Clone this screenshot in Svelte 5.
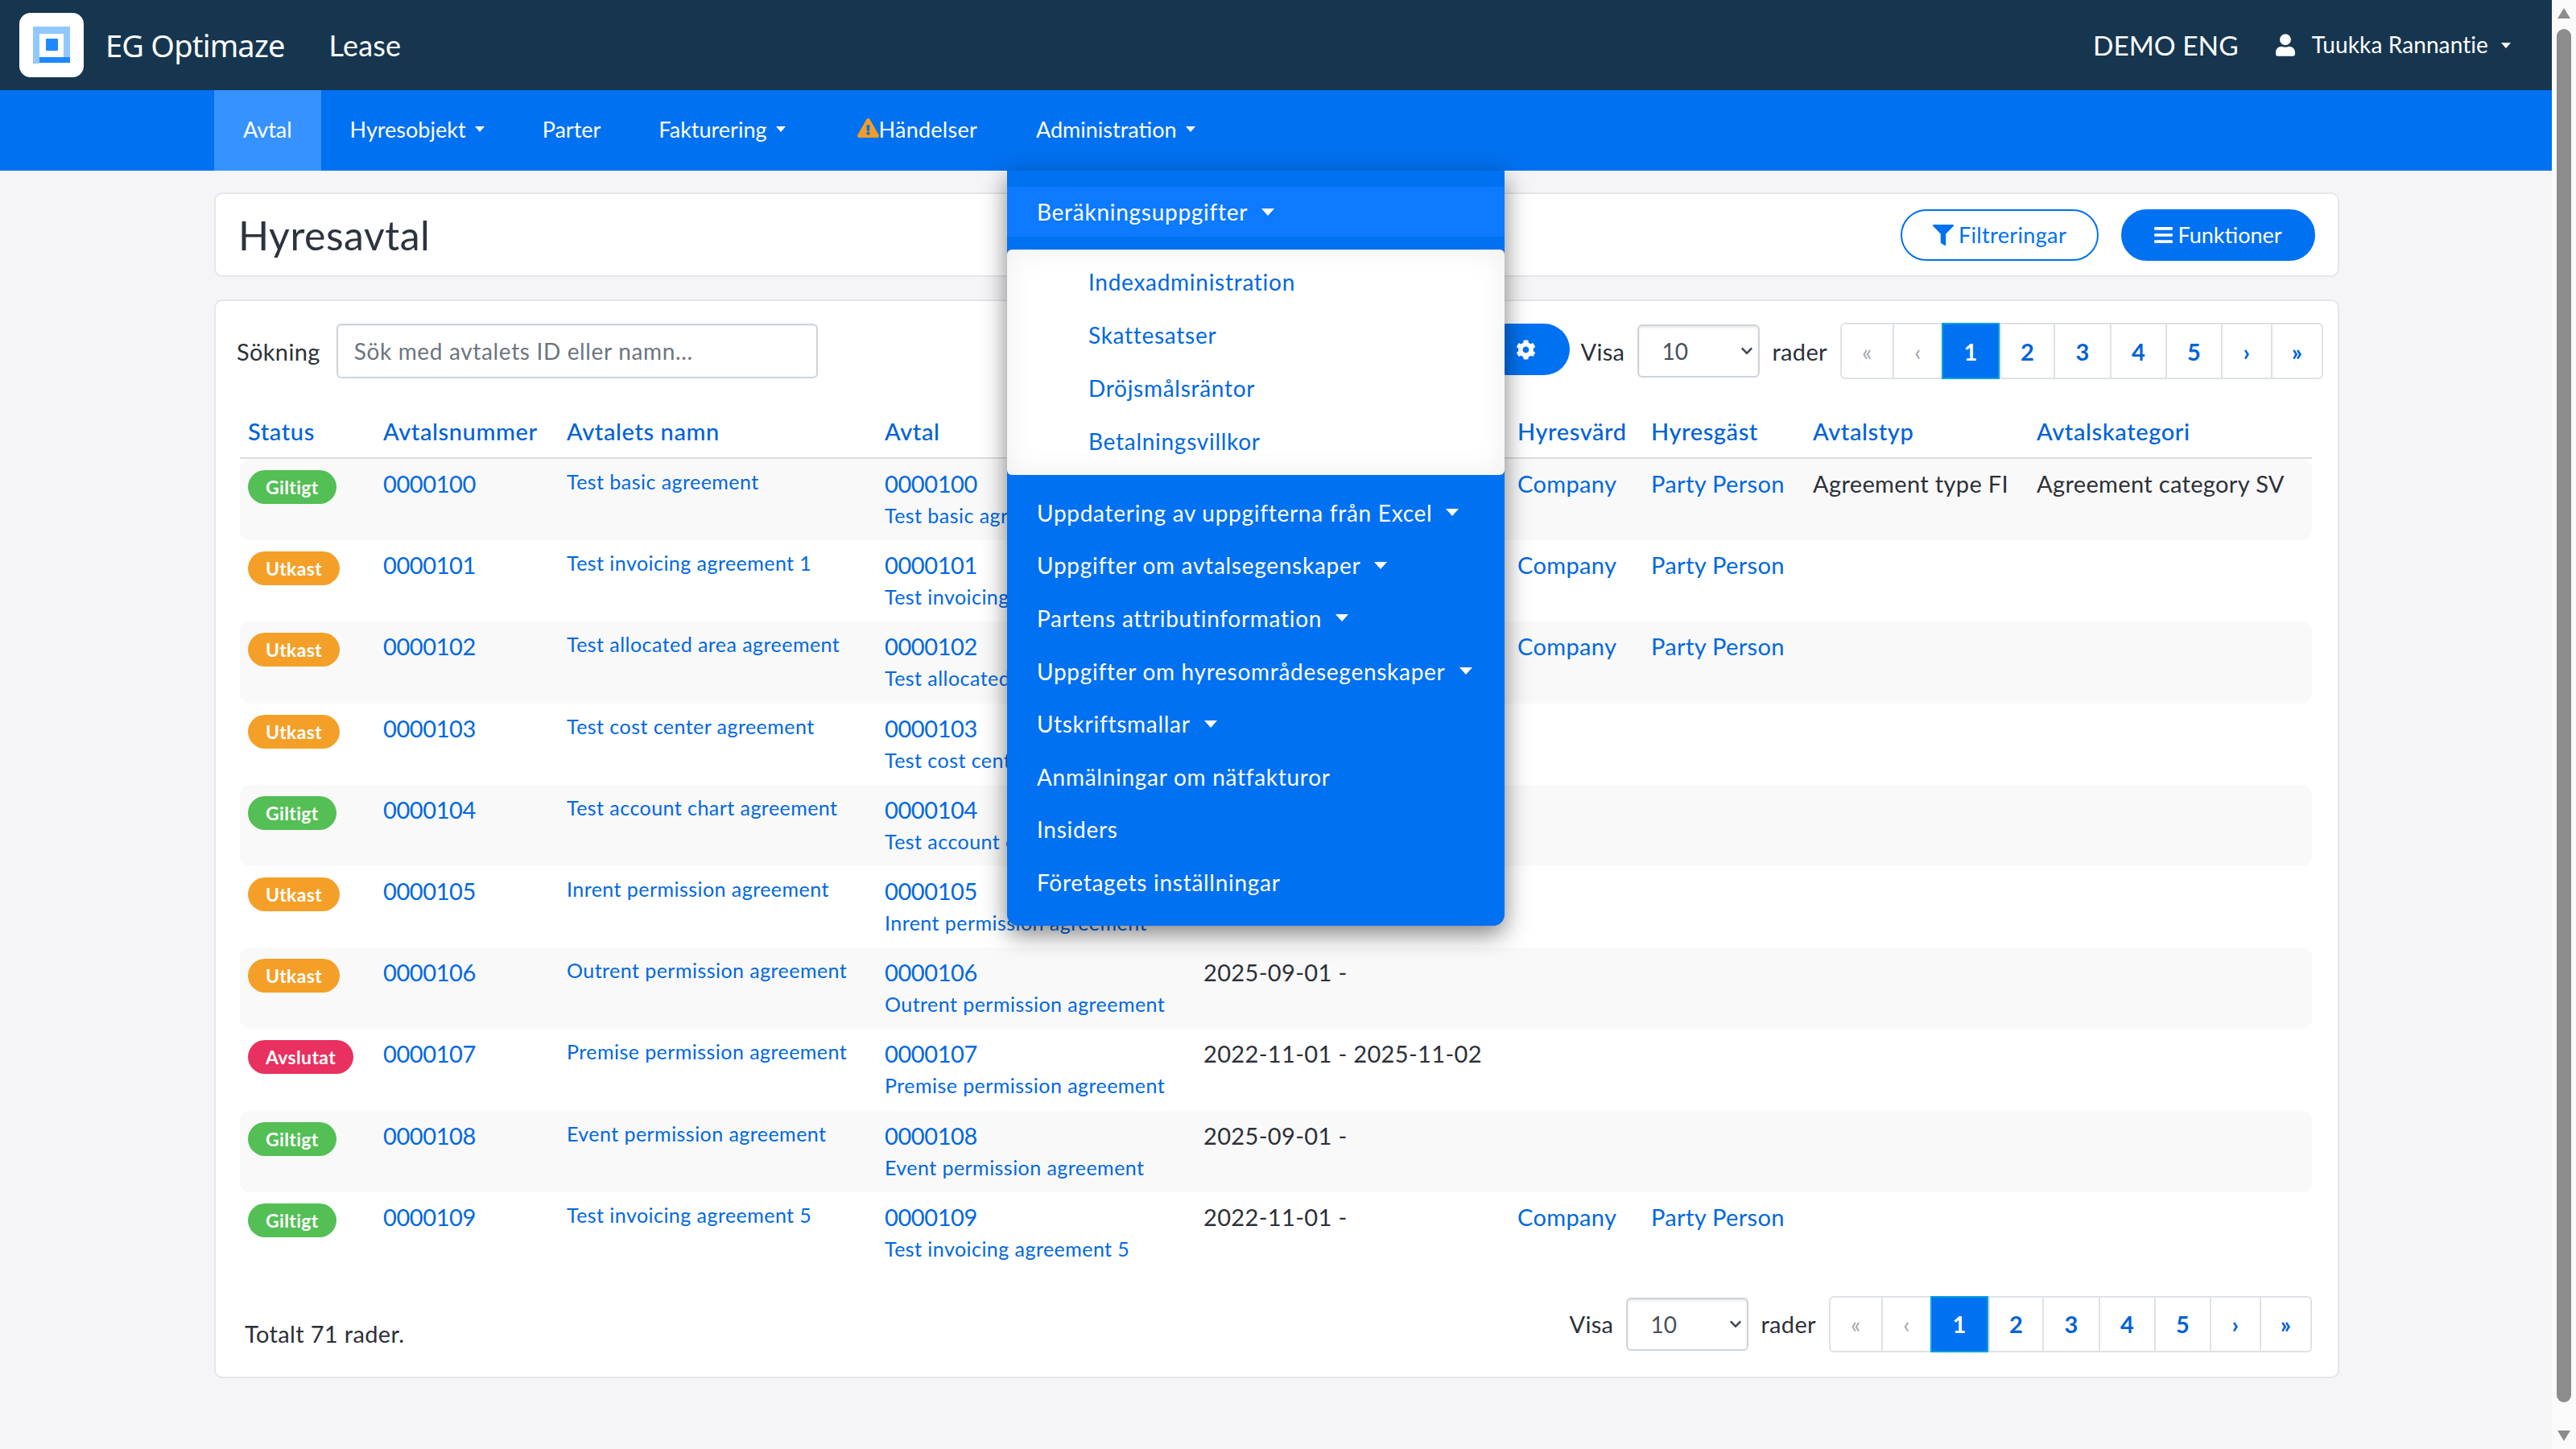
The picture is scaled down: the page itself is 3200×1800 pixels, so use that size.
<script lang="ts">
	const navItems = [
		{ label: 'Avtal', active: true },
		{ label: 'Hyresobjekt', caret: true },
		{ label: 'Parter' },
		{ label: 'Fakturering', caret: true }
	];

	const subItems = ['Indexadministration', 'Skattesatser', 'Dröjsmålsräntor', 'Betalningsvillkor'];

	const menuItems = [
		{ label: 'Uppdatering av uppgifterna från Excel', caret: true },
		{ label: 'Uppgifter om avtalsegenskaper', caret: true },
		{ label: 'Partens attributinformation', caret: true },
		{ label: 'Uppgifter om hyresområdesegenskaper', caret: true },
		{ label: 'Utskriftsmallar', caret: true },
		{ label: 'Anmälningar om nätfakturor' },
		{ label: 'Insiders' },
		{ label: 'Företagets inställningar' }
	];

	const columns = ['Status', 'Avtalsnummer', 'Avtalets namn', 'Avtal', 'Giltighetstid', 'Hyresvärd', 'Hyresgäst', 'Avtalstyp', 'Avtalskategori'];

	const rows = [
		{ status: 'Giltigt', no: '0000100', name: 'Test basic agreement', date: '2022-11-01 -', party: true, type: 'Agreement type FI', category: 'Agreement category SV' },
		{ status: 'Utkast', no: '0000101', name: 'Test invoicing agreement 1', date: '2022-11-01 -', party: true },
		{ status: 'Utkast', no: '0000102', name: 'Test allocated area agreement', date: '2022-11-01 -', party: true },
		{ status: 'Utkast', no: '0000103', name: 'Test cost center agreement', date: '2022-11-01 -' },
		{ status: 'Giltigt', no: '0000104', name: 'Test account chart agreement', date: '2022-11-01 -' },
		{ status: 'Utkast', no: '0000105', name: 'Inrent permission agreement', date: '2025-09-01 -' },
		{ status: 'Utkast', no: '0000106', name: 'Outrent permission agreement', date: '2025-09-01 -' },
		{ status: 'Avslutat', no: '0000107', name: 'Premise permission agreement', date: '2022-11-01 - 2025-11-02' },
		{ status: 'Giltigt', no: '0000108', name: 'Event permission agreement', date: '2025-09-01 -' },
		{ status: 'Giltigt', no: '0000109', name: 'Test invoicing agreement 5', date: '2022-11-01 -', party: true }
	];

	const pages = ['«', '‹', '1', '2', '3', '4', '5', '›', '»'];
</script>

{#snippet pager()}
	<ul class="pager">
		{#each pages as page, i}
			<li class:muted={i < 2} class:current={page === '1'}>{page}</li>
		{/each}
	</ul>
{/snippet}

{#snippet pageSize()}
	<span class="label">Visa</span>
	<span class="select">
		<select><option>10</option></select>
		<svg viewBox="0 0 448 512" width="16" height="16"><path fill="#3d4650" d="M207 381.5 12.7 187.1c-9.4-9.4-9.4-24.6 0-33.9l22.7-22.7c9.4-9.4 24.5-9.4 33.9 0L224 284.5l154.7-154c9.4-9.3 24.5-9.3 33.9 0l22.7 22.7c9.4 9.4 9.4 24.6 0 33.9L241 381.5c-9.4 9.4-24.6 9.4-34 0z"/></svg>
	</span>
	<span class="label">rader</span>
{/snippet}

<div class="screen">
	<div class="page">
		<header class="topbar">
			<div class="logo">
				<svg viewBox="0 0 80 80" width="80" height="80">
					<path fill="#90c8ff" d="M17 17h46v9H25v37h-8z" />
					<path fill="#90c8ff" d="M55 26h8v29h-8z" />
					<path fill="#1e88ff" d="M25 55h38v7H25z" />
					<rect fill="#1e88ff" x="33" y="32" width="15" height="15" rx="1" />
				</svg>
			</div>
			<span class="brand">EG Optimaze</span>
			<span class="product">Lease</span>
			<span class="tenant">DEMO ENG</span>
			<svg class="user-icon" viewBox="0 0 448 512" width="24" height="28">
				<path fill="#fff" d="M224 256c70.7 0 128-57.3 128-128S294.7 0 224 0 96 57.3 96 128s57.3 128 128 128zm89.6 32h-16.7c-22.2 10.2-46.9 16-72.9 16s-50.6-5.8-72.9-16h-16.7C60.2 288 0 348.2 0 422.4V464c0 26.5 21.5 48 48 48h352c26.5 0 48-21.5 48-48v-41.6c0-74.2-60.2-134.4-134.4-134.4z" />
			</svg>
			<span class="user">Tuukka Rannantie</span>
			<span class="caret small user-caret"></span>
		</header>

		<nav class="navbar">
			{#each navItems as item}
				<a class="nav-link" class:active={item.active}>
					{item.label}
					{#if item.caret}<span class="caret small"></span>{/if}
				</a>
			{/each}
			<a class="nav-link events">
				<svg viewBox="0 0 576 512" width="27" height="24">
					<path fill="#f49c25" d="M569.517 440.013C587.975 472.007 564.806 512 527.94 512H48.054c-36.937 0-59.999-40.055-41.577-71.987L246.423 23.985c18.467-32.009 64.72-31.951 83.154 0l239.94 416.028zM288 354c-25.405 0-46 20.595-46 46s20.595 46 46 46 46-20.595 46-46-20.595-46-46-46zm-43.673-165.346l7.418 136c.347 6.364 5.609 11.346 11.982 11.346h48.546c6.373 0 11.635-4.982 11.982-11.346l7.418-136c.375-6.874-5.098-12.654-11.982-12.654h-63.383c-6.884 0-12.356 5.78-11.981 12.654z" />
				</svg>Händelser
			</a>
			<div class="nav-dropdown">
				<a class="nav-link">Administration<span class="caret small"></span></a>
				<div class="menu">
					<a class="menu-item open">Beräkningsuppgifter<span class="caret"></span></a>
					<div class="submenu">
						{#each subItems as sub}
							<a class="submenu-item">{sub}</a>
						{/each}
					</div>
					{#each menuItems as item}
						<a class="menu-item">
							{item.label}
							{#if item.caret}<span class="caret"></span>{/if}
						</a>
					{/each}
				</div>
			</div>
		</nav>

		<main class="content">
			<section class="panel title-panel">
				<h1>Hyresavtal</h1>
				<button class="pill outline">
					<svg viewBox="0 0 512 512" width="26" height="26"><path fill="currentColor" d="M487.976 0H24.028C2.71 0-8.047 25.866 7.058 40.971L192 225.941V432c0 7.831 3.821 15.17 10.237 19.662l80 55.98C298.02 518.69 320 507.493 320 487.98V225.941l184.947-184.97C520.021 25.896 509.338 0 487.976 0z" /></svg>
					Filtreringar
				</button>
				<button class="pill solid">
					<svg viewBox="0 0 448 512" width="23" height="26"><path fill="currentColor" d="M16 132h416c8.837 0 16-7.163 16-16V76c0-8.837-7.163-16-16-16H16C7.163 60 0 67.163 0 76v40c0 8.837 7.163 16 16 16zm0 160h416c8.837 0 16-7.163 16-16v-40c0-8.837-7.163-16-16-16H16c-8.837 0-16 7.163-16 16v40c0 8.837 7.163 16 16 16zm0 160h416c8.837 0 16-7.163 16-16v-40c0-8.837-7.163-16-16-16H16c-8.837 0-16 7.163-16 16v40c0 8.837 7.163 16 16 16z" /></svg>
					Funktioner
				</button>
			</section>

			<section class="panel list-panel">
				<div class="toolbar">
					<span class="label search-label">Sökning</span>
					<input class="search" placeholder="Sök med avtalets ID eller namn..." />
					<button class="gear" aria-label="Inställningar">
						<svg viewBox="0 0 512 512" width="25" height="25"><path fill="#fff" d="M487.4 315.7l-42.6-24.6c4.3-23.2 4.3-47 0-70.2l42.6-24.6c4.9-2.8 7.1-8.6 5.5-14-11.1-35.6-30-67.8-54.7-94.6-3.8-4.1-10-5.1-14.8-2.3L380.8 110c-17.9-15.4-38.5-27.3-60.8-35.1V25.8c0-5.6-3.9-10.5-9.4-11.7-36.7-8.2-74.3-7.8-109.2 0-5.5 1.2-9.4 6.1-9.4 11.7V75c-22.2 7.9-42.8 19.8-60.8 35.1L88.7 85.5c-4.9-2.8-11-1.9-14.8 2.3-24.7 26.7-43.6 58.9-54.7 94.6-1.7 5.4.6 11.2 5.5 14L67.3 221c-4.3 23.2-4.3 47 0 70.2l-42.6 24.6c-4.9 2.8-7.1 8.6-5.5 14 11.1 35.6 30 67.8 54.7 94.6 3.8 4.1 10 5.1 14.8 2.3l42.6-24.6c17.9 15.4 38.5 27.3 60.8 35.1v49.2c0 5.6 3.9 10.5 9.4 11.7 36.7 8.2 74.3 7.8 109.2 0 5.5-1.2 9.4-6.1 9.4-11.7v-49.2c22.2-7.9 42.8-19.8 60.8-35.1l42.6 24.6c4.9 2.8 11 1.9 14.8-2.3 24.7-26.7 43.6-58.9 54.7-94.6 1.5-5.5-.7-11.3-5.6-14.1zM256 336c-44.1 0-80-35.9-80-80s35.9-80 80-80 80 35.9 80 80-35.9 80-80 80z" /></svg>
					</button>
					{@render pageSize()}
					{@render pager()}
				</div>

				<table>
					<colgroup>
						<col style="width:168px" /><col style="width:228px" /><col style="width:395px" />
						<col style="width:396px" /><col style="width:390px" /><col style="width:166px" />
						<col style="width:201px" /><col style="width:278px" /><col style="width:352px" />
					</colgroup>
					<thead>
						<tr>
							{#each columns as col}<th>{col}</th>{/each}
						</tr>
					</thead>
					<tbody>
						{#each rows as row}
							<tr>
								<td><span class="badge {row.status.toLowerCase()}">{row.status}</span></td>
								<td><a class="num digits">{row.no}</a></td>
								<td><a class="name">{row.name}</a></td>
								<td><a class="num digits">{row.no}</a><a class="name sub">{row.name}</a></td>
								<td class="plain">{row.date}</td>
								<td>{#if row.party}<a class="num">Company</a>{/if}</td>
								<td>{#if row.party}<a class="num">Party Person</a>{/if}</td>
								<td class="plain">{row.type ?? ''}</td>
								<td class="plain">{row.category ?? ''}</td>
							</tr>
						{/each}
					</tbody>
				</table>

				<div class="table-footer">
					<span class="label total">Totalt 71 rader.</span>
					{@render pageSize()}
					{@render pager()}
				</div>
			</section>
		</main>
	</div>

	<aside class="scrollbar">
		<span class="arrow up"></span>
		<span class="thumb"></span>
		<span class="arrow down"></span>
	</aside>
</div>

<style>
	:global(body) {
		margin: 0;
		background: #f5f5f7;
	}

	.screen {
		display: flex;
		width: 3200px;
		height: 1800px;
		overflow: hidden;
		font-family: Lato, 'Open Sans', sans-serif;
		font-size: 29px;
		letter-spacing: 0.35px;
		color: #2c3038;
	}

	.page {
		flex: 1;
		min-width: 0;
	}

	.topbar {
		display: flex;
		align-items: center;
		height: 112px;
		padding: 0 51px 0 24px;
		background: #16364f;
		color: #fff;
	}

	.logo {
		width: 80px;
		height: 80px;
		border-radius: 14px;
		background: #fff;
	}

	.brand {
		margin-left: 27px;
		font-family: 'Noto Sans', sans-serif;
		font-size: 38px;
		letter-spacing: -0.8px;
	}

	.product {
		margin-left: 55px;
		font-size: 36px;
		letter-spacing: 0.2px;
	}

	.tenant {
		margin-left: auto;
		font-size: 33.5px;
		letter-spacing: 0;
	}

	.user-icon {
		margin-left: 46px;
	}

	.user {
		margin: -3px 0 0 21px;
		font-size: 28px;
		letter-spacing: 0.1px;
	}

	.caret {
		display: inline-block;
		flex: none;
		width: 0;
		height: 0;
		margin-left: 17px;
		border-top: 9px solid currentColor;
		border-left: 8px solid transparent;
		border-right: 8px solid transparent;
	}

	.caret.small {
		margin-left: 11px;
		border-top-width: 7px;
		border-left-width: 6px;
		border-right-width: 6px;
	}

	.caret.user-caret {
		margin-left: 16px;
	}

	.navbar {
		display: flex;
		height: 100px;
		padding-left: 266px;
		background: #0071f0;
		color: #fff;
	}

	.nav-link {
		display: flex;
		align-items: center;
		padding: 0 36px 3px;
		font-size: 27px;
		letter-spacing: 0;
		white-space: nowrap;
	}

	.nav-link.active {
		background: #3592ff;
	}

	.nav-link.events {
		margin-left: 17px;
		padding-right: 37px;
		letter-spacing: 0.25px;
	}

	.nav-link.events svg {
		margin-top: -4px;
	}

	.nav-dropdown {
		position: relative;
		display: flex;
	}

	.menu {
		position: absolute;
		z-index: 10;
		top: 100px;
		left: 0;
		box-sizing: border-box;
		width: 618px;
		height: 938px;
		padding: 20px 0;
		background: #0071f0;
		border-radius: 0 0 14px 14px;
		box-shadow: 0 10px 30px rgba(0, 0, 0, 0.5);
	}

	.menu-item {
		display: flex;
		align-items: center;
		height: 65.6px;
		padding-left: 37px;
		font-size: 28px;
		letter-spacing: 0.72px;
		white-space: nowrap;
	}

	.menu-item.open {
		height: 62px;
		background: #0d7aff;
	}

	.submenu {
		box-sizing: border-box;
		height: 280px;
		margin: 16px 0 14px;
		padding-top: 7px;
		background: #fff;
		border-radius: 6px;
		box-shadow: inset 0 0 36px rgba(0, 0, 0, 0.07);
	}

	.submenu-item {
		display: flex;
		align-items: center;
		height: 66px;
		padding-left: 101px;
		font-size: 28px;
		letter-spacing: 0.72px;
		color: #0068e0;
	}

	.content {
		box-sizing: border-box;
		width: 2906px;
		padding: 27px 0 0 266px;
	}

	.panel {
		box-sizing: border-box;
		background: #fff;
		border: 2px solid #e4e6e9;
		border-radius: 10px;
	}

	.title-panel {
		display: flex;
		align-items: center;
		gap: 28px;
		height: 105px;
		padding: 0 28px 0 28px;
	}

	h1 {
		margin: 0 auto 0 0;
		font-size: 50px;
		font-weight: 400;
		letter-spacing: 0.5px;
		color: #2d3340;
	}

	.pill {
		display: flex;
		align-items: center;
		justify-content: center;
		gap: 6px;
		box-sizing: border-box;
		height: 64px;
		border: 2px solid #0071f0;
		border-radius: 32px;
		font: inherit;
		font-size: 27px;
		letter-spacing: inherit;
	}

	.pill.outline {
		width: 246px;
		background: #fff;
		color: #0071f0;
	}

	.pill.solid {
		width: 241px;
		background: #0071f0;
		color: #fff;
		letter-spacing: 0;
	}

	.list-panel {
		height: 1340px;
		margin-top: 28px;
		padding: 28px 18px 0 26px;
	}

	.toolbar {
		display: flex;
		align-items: center;
		height: 68px;
	}

	.label {
		font-size: 29px;
		color: #2c3038;
	}

	.search {
		box-sizing: border-box;
		width: 598px;
		height: 68px;
		margin-left: 20px;
		padding: 0 20px;
		font: inherit;
		font-size: 28px;
		letter-spacing: 0.65px;
		color: #2c3038;
		border: 2px solid #ced4da;
		border-radius: 6px;
		box-shadow: inset 0 1px 2px rgba(0, 0, 0, 0.08);
	}

	.search::placeholder {
		color: #6c757d;
		opacity: 1;
	}

	.gear {
		display: flex;
		align-items: center;
		justify-content: center;
		width: 110px;
		height: 64px;
		margin: -4px 13px 0 auto;
		background: #0071f0;
		border: 0;
		border-radius: 32px;
	}

	.select {
		position: relative;
		display: flex;
		align-items: center;
		margin: 0 15px 0 16px;
	}

	.select select {
		box-sizing: border-box;
		width: 152px;
		height: 66px;
		padding: 0 28px;
		font: inherit;
		font-size: 28px;
		color: #495057;
		background: #fff;
		border: 2px solid #ced4da;
		border-radius: 6px;
		box-shadow: inset 0 2px 3px rgba(0, 0, 0, 0.1);
		appearance: none;
	}

	.select svg {
		position: absolute;
		right: 8px;
		pointer-events: none;
	}

	.pager {
		display: flex;
		box-sizing: border-box;
		height: 70px;
		margin: 0 0 0 16px;
		padding: 0;
		list-style: none;
		border: 2px solid #dee2e6;
		border-radius: 6px;
	}

	.pager li {
		display: flex;
		align-items: center;
		justify-content: center;
		box-sizing: border-box;
		border-left: 2px solid #dee2e6;
		font-size: 29px;
		font-weight: 700;
		color: #0062d8;
	}

	.pager li:first-child {
		border-left: 0;
	}

	.pager li:nth-child(1) { width: 63px; }
	.pager li:nth-child(2) { width: 61px; }
	.pager li:nth-child(3) { width: 72px; }
	.pager li:nth-child(4) { width: 67px; }
	.pager li:nth-child(5) { width: 70px; }
	.pager li:nth-child(6) { width: 69px; }
	.pager li:nth-child(7) { width: 69px; }
	.pager li:nth-child(8) { width: 62px; }
	.pager li:nth-child(9) { width: 63px; }

	.pager li.muted {
		font-weight: 400;
		color: #a3a8ad;
	}

	.pager li.current {
		margin: -2px 0;
		background: #0071f0;
		border: 2px solid #00a0dc;
		color: #fff;
	}

	table {
		width: 2574px;
		margin-left: 4px;
		table-layout: fixed;
		border-collapse: separate;
		border-spacing: 0;
	}

	th {
		box-sizing: border-box;
		height: 100px;
		padding: 0 10px 14px;
		text-align: left;
		vertical-align: bottom;
		font-size: 29px;
		font-weight: 500;
		line-height: 36px;
		letter-spacing: 0.6px;
		color: #0062d8;
		white-space: nowrap;
		border-bottom: 2px solid #dcdde0;
	}

	td {
		box-sizing: border-box;
		height: 101.2px;
		padding: 13px 10px 0;
		vertical-align: top;
		font-size: 29px;
		line-height: 36px;
		white-space: nowrap;
		overflow: visible;
	}

	td.plain {
		color: #2c3038;
	}

	tbody tr:nth-child(odd) td {
		background: #f9f9f9;
	}

	tbody tr:nth-child(odd) td:first-child {
		border-radius: 12px 0 0 12px;
	}

	tbody tr:nth-child(odd) td:last-child {
		border-radius: 0 12px 12px 0;
	}

	.num,
	.name {
		display: block;
		color: #0068e0;
	}

	.num.digits {
		letter-spacing: -0.4px;
	}

	.name {
		font-size: 25px;
		line-height: 30px;
		letter-spacing: 0.45px;
	}

	.name.sub {
		margin-top: 3px;
		line-height: 36px;
	}

	.badge {
		display: inline-flex;
		align-items: center;
		height: 42px;
		margin-top: 1px;
		padding: 0 22px;
		border-radius: 21px;
		font-size: 23px;
		font-weight: 700;
		color: #fff;
	}

	.badge.giltigt { background: #53bf55; }
	.badge.utkast { background: #f4a028; }
	.badge.avslutat { background: #e8315e; }

	.table-footer {
		display: flex;
		align-items: center;
		margin: 28px 14px 0 10px;
	}

	.total {
		margin-right: auto;
		padding-top: 24px;
	}

	.scrollbar {
		display: flex;
		flex-direction: column;
		align-items: center;
		width: 30px;
		background: #fafafa;
	}

	.thumb {
		flex: none;
		width: 18px;
		height: 1706px;
		background: #8c8c8c;
		border-radius: 9px;
	}

	.arrow {
		width: 0;
		height: 0;
		border-left: 8px solid transparent;
		border-right: 8px solid transparent;
	}

	.arrow.up {
		margin-top: 10px;
		margin-bottom: 13px;
		border-bottom: 13px solid #8c8c8c;
	}

	.arrow.down {
		margin-top: 35px;
		border-top: 13px solid #8c8c8c;
	}
</style>
